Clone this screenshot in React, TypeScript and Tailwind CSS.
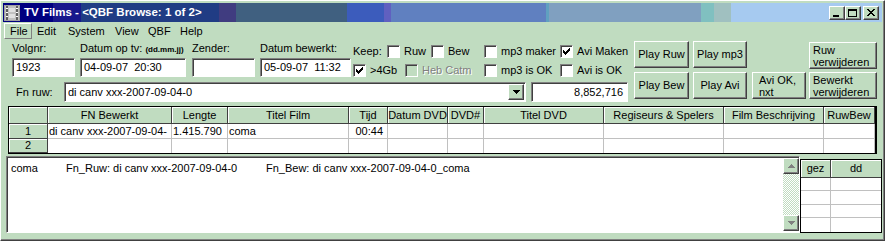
import React from 'react'

const sunken =
  'border border-t-[#808080] border-l-[#808080] border-b-white border-r-white shadow-[inset_1px_1px_0_#404040]'
const raised =
  'border border-t-white border-l-white border-b-[#404040] border-r-[#404040] shadow-[inset_-1px_-1px_0_#808080] bg-[#c0dcc0]'

const gridCols = [
  { name: 'FN Bewerkt', w: 'w-[124px]' },
  { name: 'Lengte', w: 'w-[56px]' },
  { name: 'Titel Film', w: 'w-[121px]' },
  { name: 'Tijd', w: 'w-[39px]' },
  { name: 'Datum DVD', w: 'w-[60px]' },
  { name: 'DVD#', w: 'w-[36px]' },
  { name: 'Titel DVD', w: 'w-[120px]' },
  { name: 'Regiseurs & Spelers', w: 'w-[120px]' },
  { name: 'Film Beschrijving', w: 'w-[100px]' },
  { name: 'RuwBew', w: 'w-[51px]' },
]

const rows = [
  ['di canv xxx-2007-09-04-', '1.415.790', 'coma', '00:44', '', '', '', '', '', ''],
  ['', '', '', '', '', '', '', '', '', ''],
]

function CheckMark() {
  // classic 7x7 pixel tick
  const cols = [2, 3, 4, 3, 2, 1, 0]
  return (
    <svg width="7" height="7" viewBox="0 0 7 7" shapeRendering="crispEdges">
      {cols.map((y, x) => (
        <rect key={x} x={x} y={y} width="1" height="3" fill="#000" />
      ))}
    </svg>
  )
}

function Check({ label, checked, disabled, w }: { label: string; checked?: boolean; disabled?: boolean; w: string }) {
  return (
    <div className={`flex items-center ${w}`}>
      <span
        className={`w-[13px] h-[13px] shrink-0 flex items-center justify-center ${sunken} ${disabled ? 'bg-[#c0dcc0]' : 'bg-white'}`}
      >
        {checked && <CheckMark />}
      </span>
      <span
        className={`ml-[4px] whitespace-nowrap ${disabled ? 'text-[#808080] [text-shadow:1px_1px_0_#fff]' : ''}`}
      >
        {label}
      </span>
    </div>
  )
}

function Btn({ children, className }: { children: React.ReactNode; className: string }) {
  return <div className={`${raised} h-[27px] flex items-center ${className}`}>{children}</div>
}

function Arrow({ up, color = '#000' }: { up?: boolean; color?: string }) {
  return (
    <svg width="7" height="4" viewBox="0 0 7 4" shapeRendering="crispEdges">
      <path d={up ? 'M3 0h1v1h1v1h1v1h1v1H0V3h1V2h1V1h1z' : 'M0 0h7v1H6v1H5v1H4v1H3V3H2V2H1V1H0z'} fill={color} />
    </svg>
  )
}

export default function App() {
  return (
    <div className="w-[885px] h-[241px] overflow-hidden bg-[#c0dcc0] [font-family:'Liberation_Sans',Arial,sans-serif] text-[11px] leading-[13px] text-black">
      <div className="w-[885px] h-[241px] flex flex-col border border-t-white border-l-white border-r-[#404040] border-b-[#404040] shadow-[inset_-1px_-1px_0_#808080] pt-[2px] px-[2px]">
        {/* title bar */}
        <div className="h-[19px] shrink-0 flex items-center bg-[linear-gradient(to_right,#000080_0_50px,#18188c_50px_78px,#203c84_78px_216px,#403c80_216px_233px,#406080_233px_344px,#3c5cbc_344px_381px,#6060c0_381px_388px,#6080c0_388px_543px,#60a0c0_543px_546px,#80a0c0_546px_698px,#80c0c0_698px_711px,#a0c0c0_711px_728px,#a6caf0_728px)]">
          <svg className="ml-[1px]" width="16" height="16" viewBox="0 0 16 16" shapeRendering="crispEdges">
            <rect x="0" y="0" width="16" height="16" fill="#a0a0a0" />
            <rect x="1" y="1" width="14" height="14" fill="#c0c0c0" />
            <rect x="2" y="1" width="2" height="14" fill="#606060" />
            <rect x="12" y="1" width="2" height="14" fill="#606060" />
            <rect x="5" y="3" width="6" height="4" fill="#e0e0e0" />
            <rect x="5" y="9" width="6" height="4" fill="#e0e0e0" />
            <rect x="2" y="3" width="2" height="1" fill="#fff" />
            <rect x="2" y="7" width="2" height="1" fill="#fff" />
            <rect x="2" y="11" width="2" height="1" fill="#fff" />
            <rect x="12" y="3" width="2" height="1" fill="#fff" />
            <rect x="12" y="7" width="2" height="1" fill="#fff" />
            <rect x="12" y="11" width="2" height="1" fill="#fff" />
          </svg>
          <span className="ml-[4px] text-white font-bold text-[11.5px] whitespace-nowrap">
            TV Films - &lt;QBF Browse: 1 of 2&gt;
          </span>
          <div className="ml-auto mr-[3px] flex items-center">
            <div className={`${raised} w-[16px] h-[14px] flex items-end justify-center pb-[2px]`}>
              <div className="w-[6px] h-[2px] bg-black ml-[-2px]" />
            </div>
            <div className={`${raised} w-[16px] h-[14px] flex items-center justify-center`}>
              <div className="w-[9px] h-[8px] border border-black border-t-2 ml-[-1px]" />
            </div>
            <div className={`${raised} ml-[2px] w-[16px] h-[14px] flex items-center justify-center`}>
              <svg width="8" height="7" viewBox="0 0 8 7" shapeRendering="crispEdges" className="ml-[-1px]">
                <path d="M0 0h2v1h1v1h2V1h1V0h2v1H7v1H6v1H5v1h1v1h1v1h1v1H6V6H5V5H3v1H2v1H0V6h1V5h1V4h1V3H2V2H1V1H0z" fill="#000" />
              </svg>
            </div>
          </div>
        </div>

        {/* menu bar */}
        <div className="h-[18px] shrink-0 flex items-center">
          <div className={`ml-[1px] w-[28px] h-[16px] flex items-center pl-[5px] border border-t-white border-l-white border-b-[#808080] border-r-[#808080]`}>
            File
          </div>
          <span className="ml-[5px] w-[31px]">Edit</span>
          <span className="w-[47px]">System</span>
          <span className="w-[33px]">View</span>
          <span className="w-[32px]">QBF</span>
          <span>Help</span>
        </div>

        {/* form */}
        <div className="h-[62px] shrink-0 flex">
          <div className="w-[631px] flex flex-col">
            <div className="h-[40px] flex pl-[9px]">
              <div className="w-[63px] flex flex-col">
                <div className="h-[18px] pt-[2px]">Volgnr:</div>
                <div className={`${sunken} bg-white h-[19px] flex items-center pl-[3px]`}>1923</div>
              </div>
              <div className="ml-[5px] w-[106px] flex flex-col">
                <div className="h-[18px] pt-[2px] whitespace-nowrap">
                  Datum op tv: <span className="text-[8px] font-bold">(dd.mm.jj)</span>
                </div>
                <div className={`${sunken} bg-white h-[19px] flex items-center pl-[3px] whitespace-pre`}>04-09-07  20:30</div>
              </div>
              <div className="ml-[6px] w-[63px] flex flex-col">
                <div className="h-[18px] pt-[2px]">Zender:</div>
                <div className={`${sunken} bg-white h-[19px]`} />
              </div>
              <div className="ml-[5px] w-[91px] flex flex-col">
                <div className="h-[18px] pt-[2px] whitespace-nowrap">Datum bewerkt:</div>
                <div className={`${sunken} bg-white h-[19px] flex items-center pl-[3px] whitespace-pre`}>05-09-07  11:32</div>
              </div>
              <div className="ml-[2px] flex flex-col">
                <div className="mt-[5px] h-[13px] flex items-center">
                  <span className="w-[34px]">Keep:</span>
                  <Check label="Ruw" w="w-[44px]" />
                  <Check label="Bew" w="w-[53px]" />
                  <Check label="mp3 maker" w="w-[76px]" />
                  <Check label="Avi Maken" w="w-[70px]" checked />
                </div>
                <div className="mt-[6px] h-[13px] flex items-center">
                  <Check label=">4Gb" w="w-[52px]" checked />
                  <Check label="Heb Catm" w="w-[79px]" disabled />
                  <Check label="mp3 is OK" w="w-[76px]" />
                  <Check label="Avi is OK" w="w-[70px]" />
                </div>
              </div>
            </div>
            <div className="mt-[2px] h-[20px] flex items-center pl-[13px]">
              <span className="w-[48px]">Fn ruw:</span>
              <div className={`${sunken} bg-white w-[462px] h-[20px] flex items-center pl-[3px] pr-[1px]`}>
                <span className="flex-1">di canv xxx-2007-09-04-0</span>
                <div className={`${raised} w-[16px] h-[16px] flex items-center justify-center`}>
                  <Arrow />
                </div>
              </div>
              <div className={`${sunken} bg-white ml-[5px] w-[97px] h-[20px] flex items-center justify-end pr-[4px]`}>
                8,852,716
              </div>
            </div>
          </div>

          <div className="flex flex-col">
            <div className="mt-[1px] flex items-start">
              <Btn className="w-[55px] justify-center">Play Ruw</Btn>
              <Btn className="ml-[4px] w-[54px] justify-center">Play mp3</Btn>
              <Btn className="ml-[62px] mt-[1px] w-[68px] pl-[3px] leading-[12px]">
                <span>
                  Ruw
                  <br />
                  verwijderen
                </span>
              </Btn>
            </div>
            <div className="mt-[3px] flex items-start">
              <Btn className="w-[55px] justify-center">Play Bew</Btn>
              <Btn className="ml-[4px] w-[54px] justify-center">Play Avi</Btn>
              <Btn className="ml-[5px] w-[54px] pl-[6px] leading-[12px]">
                <span>
                  Avi OK,
                  <br />
                  nxt
                </span>
              </Btn>
              <Btn className="ml-[3px] w-[68px] pl-[3px] leading-[12px]">
                <span>
                  Bewerkt
                  <br />
                  verwijderen
                </span>
              </Btn>
            </div>
          </div>
        </div>

        {/* grid */}
        <div className="mt-[4px] ml-[5px] w-[869px] shrink-0 border border-black border-r-2 bg-white">
          <div className="flex h-[17px]">
            <div className="w-[39px] bg-[#c0dcc0] border-r border-b border-[#404040] shadow-[inset_1px_1px_0_#fff]" />
            {gridCols.map((c) => (
              <div
                key={c.name}
                className={`${c.w} bg-[#c0dcc0] border-r border-b border-[#404040] shadow-[inset_1px_1px_0_#fff] flex items-center justify-center whitespace-nowrap overflow-hidden`}
              >
                {c.name}
              </div>
            ))}
          </div>
          {rows.map((r, i) => (
            <div key={i} className={`flex ${i === 0 ? 'h-[15px]' : 'h-[14px]'}`}>
              <div className="w-[39px] bg-[#c0dcc0] border-r border-b border-[#404040] shadow-[inset_1px_1px_0_#fff] flex items-center justify-center">
                {i + 1}
              </div>
              {gridCols.map((c, j) => (
                <div
                  key={c.name}
                  className={`${c.w} border-r ${i === 0 ? 'border-b' : ''} border-[#c0c0c0] flex items-center whitespace-nowrap overflow-hidden ${j === 3 ? 'justify-end pr-[4px]' : 'pl-[1px]'}`}
                >
                  {r[j]}
                </div>
              ))}
            </div>
          ))}
        </div>

        {/* bottom */}
        <div className="mt-[2px] flex items-start">
          <div className={`ml-[3px] w-[794px] h-[77px] bg-white ${sunken} flex`}>
            <div className="flex-1 pl-[4px] pt-[5px] flex whitespace-nowrap">
              <span className="w-[55px]">coma</span>
              <span className="w-[200px]">Fn_Ruw: di canv xxx-2007-09-04-0</span>
              <span>Fn_Bew: di canv xxx-2007-09-04-0_coma</span>
            </div>
            <div className="w-[16px] flex flex-col mt-[1px] mb-[1px] bg-[repeating-conic-gradient(#fff_0_25%,#c0dcc0_0_50%)] bg-[length:2px_2px]">
              <div className={`${raised} h-[16px] flex items-center justify-center`}>
                <Arrow up color="#808080" />
              </div>
              <div className="flex-1" />
              <div className={`${raised} h-[16px] flex items-center justify-center`}>
                <Arrow color="#808080" />
              </div>
            </div>
          </div>
          <div className="mt-[3px] w-[82px] h-[74px] border border-black bg-white flex flex-col">
            <div className="flex h-[18px]">
              <div className="w-[30px] bg-[#c0dcc0] border-r border-b border-[#404040] shadow-[inset_1px_1px_0_#fff] flex items-center justify-center">
                gez
              </div>
              <div className="flex-1 bg-[#c0dcc0] border-b border-[#404040] shadow-[inset_1px_1px_0_#fff] flex items-center justify-center">
                dd
              </div>
            </div>
            {[0, 1, 2, 3].map((k) => (
              <div key={k} className={`flex h-[14px] ${k < 3 ? 'border-b border-[#c0c0c0]' : ''}`}>
                <div className="w-[30px] border-r border-[#c0c0c0]" />
                <div className="flex-1" />
              </div>
            ))}
          </div>
        </div>
      </div>
    </div>
  )
}
